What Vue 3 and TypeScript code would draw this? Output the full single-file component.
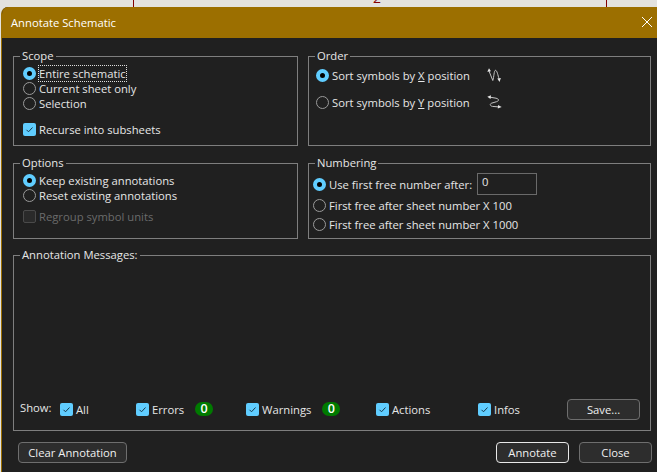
<template>
  <div class="page">
    <!-- schematic behind the dialog -->
    <div class="sheet-mark mark-a"></div>
    <div class="sheet-mark mark-b"></div>
    <span class="sheet-num">2</span>

    <div class="dialog">
      <header class="titlebar">
        <span class="title">Annotate Schematic</span>
        <svg class="close-x" width="10" height="10" viewBox="0 0 10 10">
          <path d="M0 0l10 10M10 0L0 10" stroke="#fff" stroke-width="1" fill="none" />
        </svg>
      </header>

      <div class="content">
        <div class="groups">
          <fieldset class="group scope">
            <legend>Scope</legend>
            <label class="row"><i class="radio on"></i><span class="focus">Entire schematic</span></label>
            <label class="row"><i class="radio"></i>Current sheet only</label>
            <label class="row"><i class="radio"></i>Selection</label>
            <label class="row recurse"><i class="check on"><svg viewBox="0 0 13 13"><path d="M3.500 6.800l2 2 4-4.300" /></svg></i>Recurse into subsheets</label>
          </fieldset>

          <fieldset class="group order">
            <legend>Order</legend>
            <div class="order-row">
              <label class="row sort-label"><i class="radio on"></i><span>Sort symbols by <u>X</u> position</span></label>
              <svg class="sort-icon" width="15" height="15" viewBox="0 0 15 15">
                <path d="M2 3l3.800 9.500C7 9 7 2.300 8.500 2.300c1.500 0 2.500 5.200 3.500 8.500" />
                <path class="fill" d="M0.300 3.800L2 0.300l2 3zM10.300 10.500l3.600-.5-1.400 4z" />
              </svg>
            </div>
            <div class="order-row second">
              <label class="row sort-label"><i class="radio"></i><span>Sort symbols by <u>Y</u> position</span></label>
              <svg class="sort-icon" width="15" height="15" viewBox="0 0 15 15">
                <path d="M3 2.200l6 1c3.500.8 3 2.800.5 3.500L4.500 8.200c-2 .8-1.500 2.800 1 3.200l6 .5" />
                <path class="fill" d="M4 0.300L3.500 4 0.300 1.800zM11 10l-.2 3.600 3.900-1.600z" />
              </svg>
            </div>
          </fieldset>

          <fieldset class="group options">
            <legend>Options</legend>
            <label class="row"><i class="radio on"></i>Keep existing annotations</label>
            <label class="row"><i class="radio"></i>Reset existing annotations</label>
            <label class="row regroup"><i class="check disabled"></i>Regroup symbol units</label>
          </fieldset>

          <fieldset class="group numbering">
            <legend>Numbering</legend>
            <div class="first-row">
              <label class="row num-label"><i class="radio on"></i>Use first free number after:</label>
              <div class="num-input">0</div>
            </div>
            <label class="row"><i class="radio"></i>First free after sheet number X 100</label>
            <label class="row third"><i class="radio"></i>First free after sheet number X 1000</label>
          </fieldset>
        </div>

        <fieldset class="group messages">
          <legend>Annotation Messages:</legend>
          <div class="msg-area"></div>
          <div class="show-row">
            <span class="show-label">Show:</span>
            <label v-for="f in filters" :key="f.name" class="row filter" :class="f.cls">
              <i class="check on"><svg viewBox="0 0 13 13"><path d="M3.500 6.800l2 2 4-4.300" /></svg></i>{{ f.name }}
              <b v-if="f.count !== undefined" class="badge">{{ f.count }}</b>
            </label>
            <button class="btn save">Save...</button>
          </div>
        </fieldset>

        <footer class="footer">
          <button class="btn clear">Clear Annotation</button>
          <span class="spacer"></span>
          <button class="btn primary">Annotate</button>
          <button class="btn">Close</button>
        </footer>
      </div>
    </div>
  </div>
</template>

<script setup lang="ts">
interface ShowFilter {
  name: string
  cls: string
  count?: number
}

const filters: ShowFilter[] = [
  { name: 'All', cls: 'f-all' },
  { name: 'Errors', cls: 'f-errors', count: 0 },
  { name: 'Warnings', cls: 'f-warnings', count: 0 },
  { name: 'Actions', cls: 'f-actions' },
  { name: 'Infos', cls: 'f-infos' }
]
</script>

<style>
html, body { margin: 0; background: #e3e2df; }
</style>

<style scoped>
.page {
  position: relative;
  width: 657px;
  height: 472px;
  overflow: hidden;
  padding: 7px 0 0 1px;
  box-sizing: border-box;
  background: #e3e2df;
  font-family: "Open Sans", "Noto Sans", "Liberation Sans", sans-serif;
  font-size: 11.250px;
  color: #e6e6e6;
}
.sheet-mark {
  position: absolute;
  top: 0;
  width: 1px;
  height: 7px;
  background: #840000;
}
.mark-a { left: 133px; }
.mark-b { left: 606px; }
.sheet-num {
  position: absolute;
  top: -12px;
  left: 373px;
  color: #840000;
  font-size: 14px;
}
.dialog {
  height: 465px;
  background: #202020;
  border-left: 1px solid #9c6f00;
  border-radius: 7px 0 0 0;
  overflow: hidden;
}
.titlebar {
  height: 31px;
  background: #9c6f00;
  display: flex;
  align-items: center;
  justify-content: space-between;
  padding: 0 5px 0 9px;
  color: #fff;
}
.close-x { display: block; margin-top: -1px; }
.content {
  padding: 11px 5px 0 11px;
}
.groups {
  display: grid;
  grid-template-columns: 285px 343px;
  grid-template-rows: 97px 83px;
  column-gap: 10px;
  row-gap: 10px;
}
.group {
  margin: 0;
  min-width: 0;
  border: 1px solid #7e7e7e;
  padding: 3px 9px 0;
  box-sizing: border-box;
}
.group legend {
  padding: 0 2px;
  margin-left: -3px;
  line-height: 14px;
  height: 14px;
  color: #e6e6e6;
}
.row {
  display: flex;
  align-items: center;
  height: 15px;
  white-space: nowrap;
}
.radio {
  flex: none;
  width: 13px;
  height: 13px;
  margin-right: 3px;
  border: 1px solid #9a9a9a;
  border-radius: 50%;
  box-sizing: border-box;
}
.radio.on {
  border: 4px solid #60cdff;
  background: #000;
}
.check {
  flex: none;
  width: 13px;
  height: 13px;
  margin-right: 3px;
  border-radius: 2px;
  box-sizing: border-box;
}
.check.on { background: #60cdff; }
.check svg { display: block; width: 13px; height: 13px; }
.check path { fill: none; stroke: #16384a; stroke-width: 1; }
.check.disabled { border: 1px solid #4a4a4a; background: #2a2a2a; }
.focus { outline: 1px dotted #ddd; outline-offset: 0; }
.recurse { margin-top: 11px; }
.regroup { margin-top: 6px; color: #6b6b6b; }

.order { padding: 0 7px; }
.order legend { margin-left: -1px; }
.order-row {
  display: flex;
  align-items: center;
  height: 15px;
  margin-top: 5px;
}
.order-row.second { margin-top: 12px; }
.sort-label { width: 171px; }
.sort-icon { flex: none; }
.sort-icon path { fill: none; stroke: #c4c4c4; stroke-width: 1; }
.sort-icon path.fill { fill: #e4e4e4; stroke: none; }

.numbering { padding-left: 4px; }
.numbering legend { margin-left: 2px; }
.first-row {
  display: flex;
  align-items: center;
  height: 22px;
}
.num-label { width: 164px; }
.num-input {
  width: 60px;
  height: 22px;
  padding: 0 0 2px 4px;
  box-sizing: border-box;
  border: 1px solid #6a6a6a;
  line-height: 16px;
}
.third { margin-top: 4px; }
.first-row + .row { margin-top: 3px; }

.messages {
  width: 638px;
  height: 183px;
  margin-top: 9px;
  padding: 0 9px 0 6px;
}
.messages legend { margin-left: 0; }
.msg-area { height: 137px; }
.show-row {
  display: flex;
  align-items: center;
  height: 21px;
}
.show-label { width: 40px; margin-top: -4px; }
.filter { margin-top: 0; }
.f-all { width: 76px; }
.f-errors { width: 110px; }
.f-warnings { width: 130px; }
.f-actions { width: 102px; }
.f-infos { width: 89px; }
.badge {
  width: 18px;
  height: 14px;
  margin-left: 11px;
  margin-top: -2px;
  border-radius: 7px;
  background: #007a00;
  color: #fff;
  font-size: 12.500px;
  font-weight: 600;
  text-align: center;
  line-height: 14px;
}
.btn {
  height: 21px;
  width: 73px;
  padding: 0;
  box-sizing: border-box;
  border: 1px solid #6e6e6e;
  border-radius: 4px;
  background: #2d2d2d;
  color: #f0f0f0;
  font: inherit;
}
.clear { width: 109px; }
.primary { border-color: #e8e8e8; }
.footer {
  display: flex;
  gap: 10px;
  margin-top: 11px;
  padding-left: 5px;
}
.spacer { flex: 1; }
</style>
